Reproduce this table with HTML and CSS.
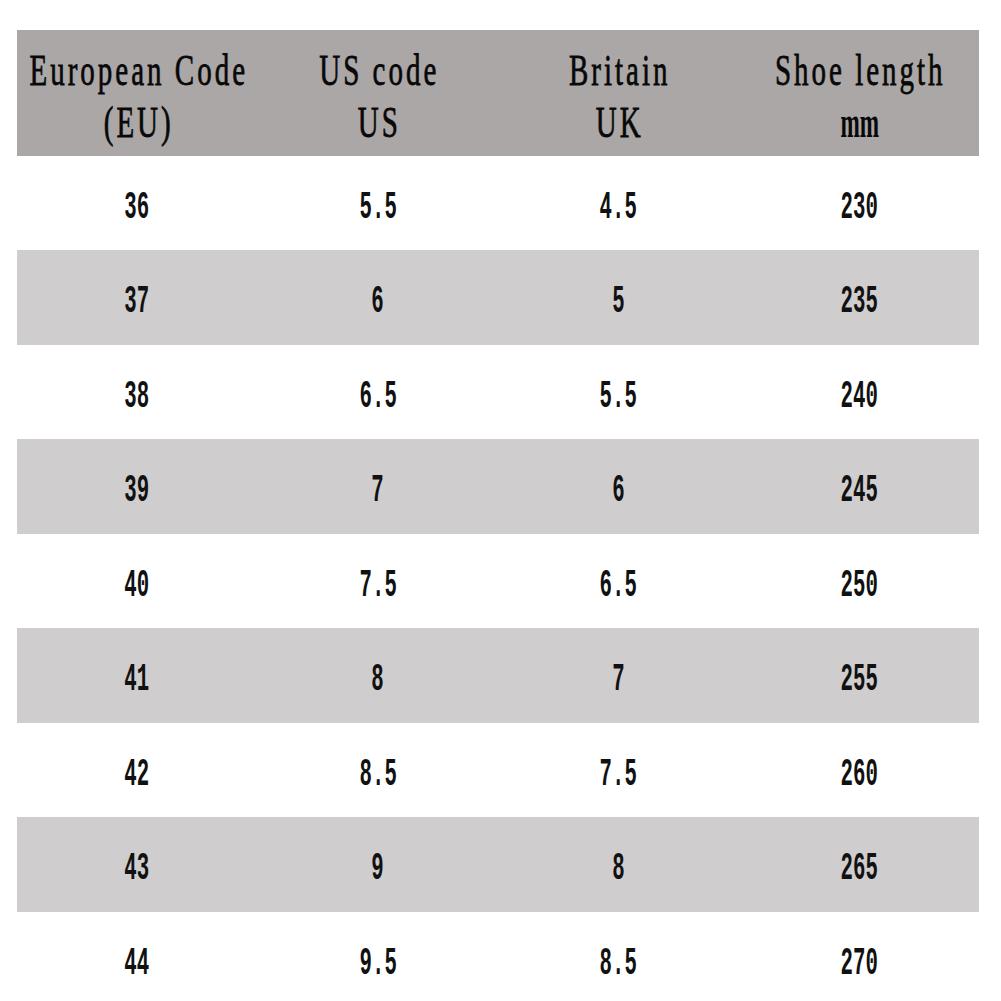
FILE: index.html
```html
<!DOCTYPE html>
<html>
<head>
<meta charset="utf-8">
<link rel="stylesheet" href="styles.css">
</head>
<body>
<div class="chart">
  <div class="row head">
    <div class="cell"><span class="t">European Code</span><span class="t">(EU)</span></div>
    <div class="cell"><span class="t">US code</span><span class="t">US</span></div>
    <div class="cell"><span class="t">Britain</span><span class="t">UK</span></div>
    <div class="cell"><span class="t">Shoe length</span><span class="t mm">mm</span></div>
  </div>
  <div class="row w"><div class="cell"><span class="t">36</span></div><div class="cell"><span class="t">5.5</span></div><div class="cell"><span class="t">4.5</span></div><div class="cell"><span class="t">230</span></div></div>
  <div class="row g"><div class="cell"><span class="t">37</span></div><div class="cell"><span class="t">6</span></div><div class="cell"><span class="t">5</span></div><div class="cell"><span class="t">235</span></div></div>
  <div class="row w"><div class="cell"><span class="t">38</span></div><div class="cell"><span class="t">6.5</span></div><div class="cell"><span class="t">5.5</span></div><div class="cell"><span class="t">240</span></div></div>
  <div class="row g"><div class="cell"><span class="t">39</span></div><div class="cell"><span class="t">7</span></div><div class="cell"><span class="t">6</span></div><div class="cell"><span class="t">245</span></div></div>
  <div class="row w"><div class="cell"><span class="t">40</span></div><div class="cell"><span class="t">7.5</span></div><div class="cell"><span class="t">6.5</span></div><div class="cell"><span class="t">250</span></div></div>
  <div class="row g"><div class="cell"><span class="t">41</span></div><div class="cell"><span class="t">8</span></div><div class="cell"><span class="t">7</span></div><div class="cell"><span class="t">255</span></div></div>
  <div class="row w"><div class="cell"><span class="t">42</span></div><div class="cell"><span class="t">8.5</span></div><div class="cell"><span class="t">7.5</span></div><div class="cell"><span class="t">260</span></div></div>
  <div class="row g"><div class="cell"><span class="t">43</span></div><div class="cell"><span class="t">9</span></div><div class="cell"><span class="t">8</span></div><div class="cell"><span class="t">265</span></div></div>
  <div class="row w"><div class="cell"><span class="t">44</span></div><div class="cell"><span class="t">9.5</span></div><div class="cell"><span class="t">8.5</span></div><div class="cell"><span class="t">270</span></div></div>
</div>
</body>
</html>
```
FILE: styles.css
```css
html, body {
  margin: 0;
  padding: 0;
  background: #ffffff;
  overflow: hidden;
}
body {
  height: 1001px;
}
.chart {
  margin: 30px 0 0 17px;
  width: 962px;
  color: #111111;
}
.row {
  display: grid;
  grid-template-columns: repeat(4, minmax(0, 1fr));
}
.cell {
  display: flex;
  flex-direction: column;
  align-items: center;
  justify-content: center;
  min-width: 0;
}
.t {
  display: inline-block;
  white-space: pre;
}
.head {
  height: 126px;
  background: #aba7a7;
  font-family: "Liberation Serif", "DejaVu Serif", serif;
  font-size: 29px;
  letter-spacing: 3px;
  color: #080808;
  -webkit-text-stroke: 0.5px #080808;
}
.head .cell {
  padding-top: 4px;
}
.head .t {
  line-height: 52px;
  transform: scaleY(1.56);
  text-indent: 3px;
}
.head .mm {
  font-weight: bold;
  letter-spacing: 0;
  -webkit-text-stroke: 0;
  transform: scale(0.8, 1.56);
}
.w, .g {
  font-family: "Liberation Mono", "DejaVu Sans Mono", monospace;
  font-size: 28px;
  font-weight: bold;
}
.w .t, .g .t {
  transform: scale(0.74, 1.4);
}
.w {
  height: 94px;
  background: #ffffff;
}
.g {
  height: 95px;
  background: #cfcdce;
}
.w .cell, .g .cell {
  padding-top: 8px;
}
```
